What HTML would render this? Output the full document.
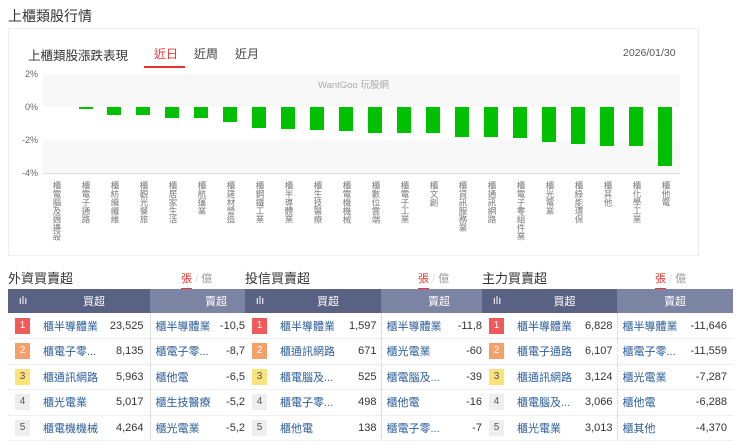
<!DOCTYPE html>
<html><head><meta charset="utf-8"><style>
*{margin:0;padding:0;box-sizing:border-box}
body{width:740px;height:446px;background:#fff;font-family:"Liberation Sans","Noto Sans CJK TC",sans-serif;position:relative;overflow:hidden;color:#333}
.a{position:absolute}
.bar{position:absolute;width:14px;background:#00c000;top:107px}
.lab{position:absolute;top:181px;writing-mode:vertical-rl;font-size:8.5px;line-height:10px;color:#777;width:10px}
.yl{position:absolute;left:20px;font-size:9px;color:#666;width:18px;text-align:right}
table{border-collapse:collapse;position:absolute;top:289px;font-size:11px;table-layout:fixed}
th{height:24px;color:#fff;font-weight:normal;font-size:11px}
td{height:25.5px;border-bottom:1px solid #eee;white-space:nowrap;overflow:hidden;color:#333}
td.n{color:#2a5d9a;padding-left:5px}
.r{display:inline-block;width:15px;height:16px;text-align:center;line-height:16px;font-size:10px;color:#555;background:#eee}
.h3{position:absolute;top:268px;font-size:13px;color:#333}
.tg{position:absolute;top:270px;font-size:11px;color:#999}
.tg b{color:#e33;font-weight:normal;border-bottom:2px solid #e33;padding-bottom:3px}
.d{border-left:1px dotted #ccc}
</style></head><body>
<div class="a" style="left:8px;top:6px;font-size:14px;color:#333">上櫃類股行情</div>
<div class="a" style="left:8px;top:28px;width:691px;height:228px;border:1px solid #eee"></div>
<div class="a" style="left:28px;top:45px;font-size:12.5px;color:#333">上櫃類股漲跌表現</div>
<div class="a" style="left:154px;top:45px;font-size:12px;color:#e33">近日</div>
<div class="a" style="left:144px;top:66px;width:41px;height:2px;background:#e33"></div>
<div class="a" style="left:194px;top:45px;font-size:12px;color:#444">近周</div>
<div class="a" style="left:235px;top:45px;font-size:12px;color:#444">近月</div>
<div class="a" style="left:623px;top:47px;font-size:10.5px;color:#555">2026/01/30</div>
<div class="a" style="left:43px;top:74px;width:637px;height:33px;background:#f8f8f8"></div>
<div class="a" style="left:43px;top:140px;width:637px;height:33px;background:#f8f8f8"></div>
<div class="a" style="left:43px;top:173px;width:637px;height:1px;background:#ddd"></div>
<div class="a" style="left:318px;top:77px;font-size:9.5px;color:#aaa">WantGoo 玩股網</div>
<div class="yl" style="top:69px">2%</div><div class="yl" style="top:102px">0%</div><div class="yl" style="top:135px">-2%</div><div class="yl" style="top:168px">-4%</div>
<div class="bar" style="left:79px;height:2px"></div>
<div class="bar" style="left:107px;height:8px"></div>
<div class="bar" style="left:136px;height:8px"></div>
<div class="bar" style="left:165px;height:11px"></div>
<div class="bar" style="left:194px;height:11px"></div>
<div class="bar" style="left:223px;height:15px"></div>
<div class="bar" style="left:252px;height:21px"></div>
<div class="bar" style="left:281px;height:22px"></div>
<div class="bar" style="left:310px;height:23px"></div>
<div class="bar" style="left:339px;height:24px"></div>
<div class="bar" style="left:368px;height:26px"></div>
<div class="bar" style="left:397px;height:26px"></div>
<div class="bar" style="left:426px;height:26px"></div>
<div class="bar" style="left:455px;height:30px"></div>
<div class="bar" style="left:484px;height:30px"></div>
<div class="bar" style="left:513px;height:31px"></div>
<div class="bar" style="left:542px;height:35px"></div>
<div class="bar" style="left:571px;height:37px"></div>
<div class="bar" style="left:600px;height:39px"></div>
<div class="bar" style="left:629px;height:39px"></div>
<div class="bar" style="left:658px;height:59px"></div>
<div class="lab" style="left:52px">櫃電腦及週邊設</div>
<div class="lab" style="left:81px">櫃電子通路</div>
<div class="lab" style="left:110px">櫃紡織纖維</div>
<div class="lab" style="left:139px">櫃觀光餐旅</div>
<div class="lab" style="left:168px">櫃居家生活</div>
<div class="lab" style="left:197px">櫃航運業</div>
<div class="lab" style="left:226px">櫃建材營造</div>
<div class="lab" style="left:255px">櫃鋼鐵工業</div>
<div class="lab" style="left:284px">櫃半導體業</div>
<div class="lab" style="left:313px">櫃生技醫療</div>
<div class="lab" style="left:342px">櫃電機機械</div>
<div class="lab" style="left:371px">櫃數位雲端</div>
<div class="lab" style="left:400px">櫃電子工業</div>
<div class="lab" style="left:429px">櫃文創</div>
<div class="lab" style="left:458px">櫃資訊服務業</div>
<div class="lab" style="left:487px">櫃通訊網路</div>
<div class="lab" style="left:516px">櫃電子零組件業</div>
<div class="lab" style="left:545px">櫃光電業</div>
<div class="lab" style="left:574px">櫃綠能環保</div>
<div class="lab" style="left:603px">櫃其他</div>
<div class="lab" style="left:632px">櫃化學工業</div>
<div class="lab" style="left:661px">櫃他電</div>

<div class="h3" style="left:8px">外資買賣超</div><div class="tg" style="left:181px"><b>張</b> <span style="color:#ddd">/</span> 億</div>
<div class="h3" style="left:245px">投信買賣超</div><div class="tg" style="left:418px"><b>張</b> <span style="color:#ddd">/</span> 億</div>
<div class="h3" style="left:482px">主力買賣超</div><div class="tg" style="left:655px"><b>張</b> <span style="color:#ddd">/</span> 億</div>

<table style="left:8px;width:237px">
<colgroup><col style="width:30px"><col style="width:70px"><col style="width:42px"><col style="width:66px"><col style="width:29px"></colgroup>
<tr><th style="background:#5a6283">ılı</th><th style="background:#5a6283" colspan="2">買超</th><th style="background:#7c84a4;text-align:right;padding-right:18px" colspan="2">賣超</th></tr>
<tr><td style="padding-left:7px"><span class="r" style="background:#f05a5a;color:#fff">1</span></td><td class="n">櫃半導體業</td><td style="text-align:right;padding-right:6px">23,525</td><td class="n d">櫃半導體業</td><td style="text-align:right">-10,5</td></tr>
<tr><td style="padding-left:7px"><span class="r" style="background:#f4a06a;color:#fff">2</span></td><td class="n">櫃電子零...</td><td style="text-align:right;padding-right:6px">8,135</td><td class="n d">櫃電子零...</td><td style="text-align:right">-8,7</td></tr>
<tr><td style="padding-left:7px"><span class="r" style="background:#fbe27a">3</span></td><td class="n">櫃通訊網路</td><td style="text-align:right;padding-right:6px">5,963</td><td class="n d">櫃他電</td><td style="text-align:right">-6,5</td></tr>
<tr><td style="padding-left:7px"><span class="r">4</span></td><td class="n">櫃光電業</td><td style="text-align:right;padding-right:6px">5,017</td><td class="n d">櫃生技醫療</td><td style="text-align:right">-5,2</td></tr>
<tr><td style="padding-left:7px"><span class="r">5</span></td><td class="n">櫃電機機械</td><td style="text-align:right;padding-right:6px">4,264</td><td class="n d">櫃光電業</td><td style="text-align:right">-5,2</td></tr>
</table>
<table style="left:245px;width:237px">
<colgroup><col style="width:30px"><col style="width:70px"><col style="width:36px"><col style="width:68px"><col style="width:33px"></colgroup>
<tr><th style="background:#5a6283">ılı</th><th style="background:#5a6283" colspan="2">買超</th><th style="background:#7c84a4;text-align:right;padding-right:32px" colspan="2">賣超</th></tr>
<tr><td style="padding-left:7px"><span class="r" style="background:#f05a5a;color:#fff">1</span></td><td class="n">櫃半導體業</td><td style="text-align:right;padding-right:4px">1,597</td><td class="n d">櫃半導體業</td><td style="text-align:right">-11,8</td></tr>
<tr><td style="padding-left:7px"><span class="r" style="background:#f4a06a;color:#fff">2</span></td><td class="n">櫃通訊網路</td><td style="text-align:right;padding-right:4px">671</td><td class="n d">櫃光電業</td><td style="text-align:right">-60</td></tr>
<tr><td style="padding-left:7px"><span class="r" style="background:#fbe27a">3</span></td><td class="n">櫃電腦及...</td><td style="text-align:right;padding-right:4px">525</td><td class="n d">櫃電腦及...</td><td style="text-align:right">-39</td></tr>
<tr><td style="padding-left:7px"><span class="r">4</span></td><td class="n">櫃電子零...</td><td style="text-align:right;padding-right:4px">498</td><td class="n d">櫃他電</td><td style="text-align:right">-16</td></tr>
<tr><td style="padding-left:7px"><span class="r">5</span></td><td class="n">櫃他電</td><td style="text-align:right;padding-right:4px">138</td><td class="n d">櫃電子零...</td><td style="text-align:right">-7</td></tr>
</table>
<table style="left:482px;width:251px">
<colgroup><col style="width:30px"><col style="width:65px"><col style="width:40px"><col style="width:66px"><col style="width:50px"></colgroup>
<tr><th style="background:#5a6283">ılı</th><th style="background:#5a6283" colspan="2">買超</th><th style="background:#7c84a4" colspan="2">賣超</th></tr>
<tr><td style="padding-left:7px"><span class="r" style="background:#f05a5a;color:#fff">1</span></td><td class="n">櫃半導體業</td><td style="text-align:right;padding-right:4px">6,828</td><td class="n d">櫃半導體業</td><td style="text-align:right;padding-right:6px">-11,646</td></tr>
<tr><td style="padding-left:7px"><span class="r" style="background:#f4a06a;color:#fff">2</span></td><td class="n">櫃電子通路</td><td style="text-align:right;padding-right:4px">6,107</td><td class="n d">櫃電子零...</td><td style="text-align:right;padding-right:6px">-11,559</td></tr>
<tr><td style="padding-left:7px"><span class="r" style="background:#fbe27a">3</span></td><td class="n">櫃通訊網路</td><td style="text-align:right;padding-right:4px">3,124</td><td class="n d">櫃光電業</td><td style="text-align:right;padding-right:6px">-7,287</td></tr>
<tr><td style="padding-left:7px"><span class="r">4</span></td><td class="n">櫃電腦及...</td><td style="text-align:right;padding-right:4px">3,066</td><td class="n d">櫃他電</td><td style="text-align:right;padding-right:6px">-6,288</td></tr>
<tr><td style="padding-left:7px"><span class="r">5</span></td><td class="n">櫃光電業</td><td style="text-align:right;padding-right:4px">3,013</td><td class="n d">櫃其他</td><td style="text-align:right;padding-right:6px">-4,370</td></tr>
</table>
</body></html>
